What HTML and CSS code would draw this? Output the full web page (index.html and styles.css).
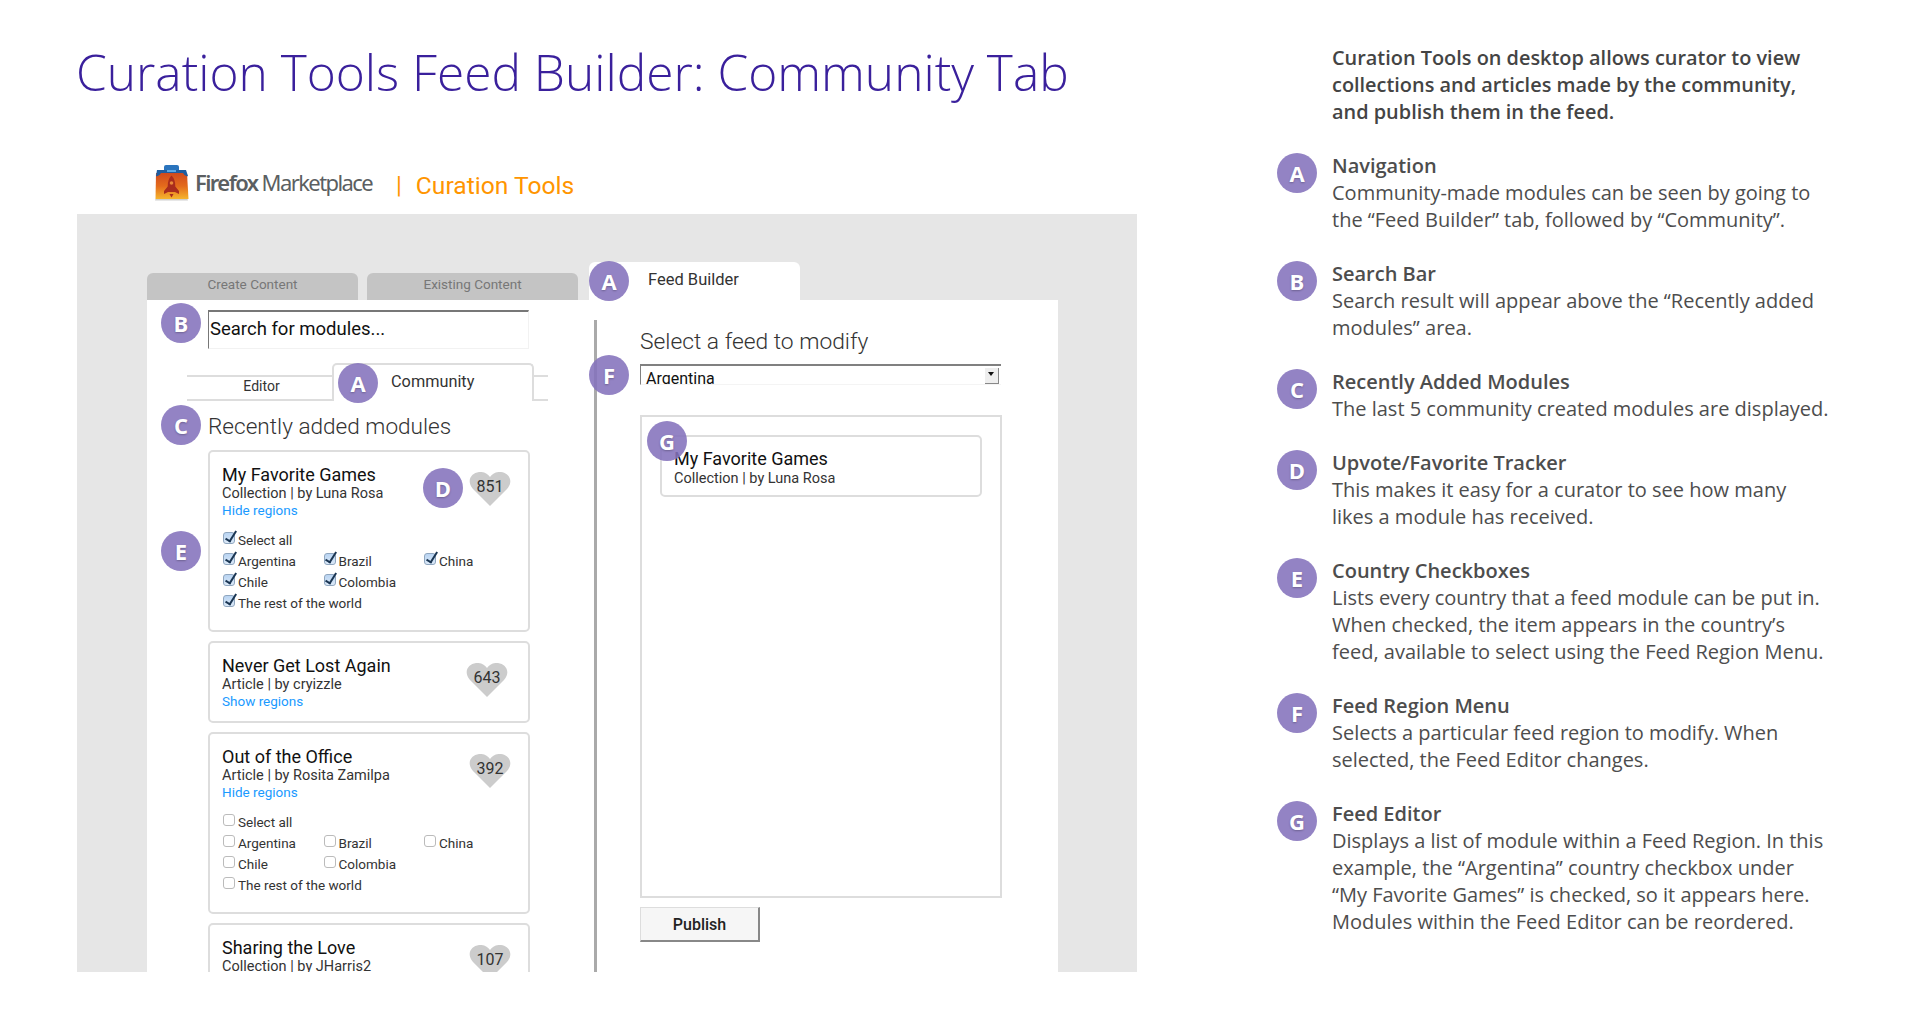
FILE: index.html
```html
<!DOCTYPE html>
<html lang="en">
<head>
<meta charset="UTF-8" />
<title>Curation Tools Feed Builder: Community Tab</title>
<link rel="stylesheet" href="styles.css">
</head>
<body>

<div class="page">
  <section class="mock">
    <h1>Curation Tools Feed Builder: Community Tab</h1>

    <div class="brand">
      <svg class="brand-logo" width="36" height="37" viewBox="0 0 36 37">
        <defs>
          <linearGradient id="bag" x1="0" y1="0" x2="0" y2="1">
            <stop offset="0" stop-color="#cf4a1e"/>
            <stop offset="0.5" stop-color="#e46a1c"/>
            <stop offset="1" stop-color="#f5b52e"/>
          </linearGradient>
        </defs>
        <path d="M2 9h31l1.500 26h-33z" fill="url(#bag)"/>
        <path d="M10 8V3q0-2 2-2h11q2 0 2 2v5h-4V6h-7v2z" fill="#2a74bd"/>
        <path d="M3 6h29l2 6q-3 1-5-3H7q-2 4-5 3z" fill="#1f5d9f"/>
        <rect x="13" y="6" width="9" height="2" fill="#5aa8e6"/>
        <path d="M17.500 11.500q4 4 3.800 11l3.700 4.500v3l-4-2h-7l-4 2v-3l3.700-4.500q-.2-7 3.800-11z" fill="#a92c1d"/>
        <circle cx="17.500" cy="19" r="1.800" fill="#e8883a"/>
        <path d="M15.500 30h4l-2 3.500z" fill="#a92c1d"/>
        <path d="M1.500 35h32l.5 1.500H1z" fill="#cfcfcf"/>
      </svg>
      <span class="brand-name"><b>Firefox</b> Marketplace</span>
      <span class="brand-sep">|</span>
      <span class="brand-tools">Curation Tools</span>
    </div>

    <div class="panel">
      <div class="main-tabs">
        <div class="main-tab">Create Content</div>
        <div class="main-tab">Existing Content</div>
        <div class="main-tab main-tab-active">
          <span class="badge badge-feed">A</span>
          Feed Builder
        </div>
      </div>

      <div class="sheet">
        <div class="modules">
          <div class="search">
            <span class="badge badge-search">B</span>
            <div class="search-box">Search for modules...</div>
          </div>

          <div class="sub-tabs">
            <div class="sub-tab">Editor</div>
            <div class="sub-tab sub-tab-active">
              <span class="badge badge-community">A</span>
              Community
            </div>
            <div class="sub-tab-end"></div>
          </div>

          <h2 class="recent">
            <span class="badge badge-recent">C</span>
            Recently added modules
          </h2>

          <div class="card">
            <span class="badge badge-heart">D</span>
            <span class="badge badge-regions">E</span>
            <div class="card-head">
              <div>
                <div class="card-title">My Favorite Games</div>
                <div class="card-meta">Collection | by Luna Rosa</div>
                <a class="card-link">Hide regions</a>
              </div>
              <div class="heart">
                <svg width="42" height="34" viewBox="0 0 42 34"><path d="M21 34L4 17C-3 9 2 1 10 0c5-.5 9 2 11 5 2-3 6-5.500 11-5 8 1 13 9 6 17z"/></svg>
                <span>851</span>
              </div>
            </div>
            <div class="regions">
              <label class="full"><input type="checkbox" checked>Select all</label>
              <label><input type="checkbox" checked>Argentina</label>
              <label><input type="checkbox" checked>Brazil</label>
              <label><input type="checkbox" checked>China</label>
              <label><input type="checkbox" checked>Chile</label>
              <label><input type="checkbox" checked>Colombia</label>
              <label class="full"><input type="checkbox" checked>The rest of the world</label>
            </div>
          </div>

          <div class="card">
            <div class="card-head">
              <div>
                <div class="card-title">Never Get Lost Again</div>
                <div class="card-meta">Article | by cryizzle</div>
                <a class="card-link">Show regions</a>
              </div>
              <div class="heart heart-in">
                <svg width="42" height="34" viewBox="0 0 42 34"><path d="M21 34L4 17C-3 9 2 1 10 0c5-.5 9 2 11 5 2-3 6-5.500 11-5 8 1 13 9 6 17z"/></svg>
                <span>643</span>
              </div>
            </div>
          </div>

          <div class="card">
            <div class="card-head">
              <div>
                <div class="card-title">Out of the Office</div>
                <div class="card-meta">Article | by Rosita Zamilpa</div>
                <a class="card-link">Hide regions</a>
              </div>
              <div class="heart">
                <svg width="42" height="34" viewBox="0 0 42 34"><path d="M21 34L4 17C-3 9 2 1 10 0c5-.5 9 2 11 5 2-3 6-5.500 11-5 8 1 13 9 6 17z"/></svg>
                <span>392</span>
              </div>
            </div>
            <div class="regions">
              <label class="full"><input type="checkbox">Select all</label>
              <label><input type="checkbox">Argentina</label>
              <label><input type="checkbox">Brazil</label>
              <label><input type="checkbox">China</label>
              <label><input type="checkbox">Chile</label>
              <label><input type="checkbox">Colombia</label>
              <label class="full"><input type="checkbox">The rest of the world</label>
            </div>
          </div>

          <div class="card">
            <div class="card-head">
              <div>
                <div class="card-title">Sharing the Love</div>
                <div class="card-meta">Collection | by JHarris2</div>
              </div>
              <div class="heart">
                <svg width="42" height="34" viewBox="0 0 42 34"><path d="M21 34L4 17C-3 9 2 1 10 0c5-.5 9 2 11 5 2-3 6-5.500 11-5 8 1 13 9 6 17z"/></svg>
                <span>107</span>
              </div>
            </div>
          </div>
        </div>

        <div class="feed">
          <h2 class="feed-label">Select a feed to modify</h2>
          <div class="feed-select">
            <span class="badge badge-select">F</span>
            <div class="select-box">
              <span>Argentina</span>
              <span class="select-arrow"></span>
            </div>
          </div>
          <div class="editor">
            <div class="editor-card">
              <span class="badge badge-editor">G</span>
              <div class="card-title">My Favorite Games</div>
              <div class="card-meta">Collection | by Luna Rosa</div>
            </div>
          </div>
          <button type="button" class="publish">Publish</button>
        </div>
      </div>
    </div>
  </section>

  <aside class="notes">
    <p class="intro">Curation Tools on desktop allows curator to view<br>collections and articles made by the community,<br>and publish them in the feed.</p>

    <div class="note">
      <span class="badge badge-note">A</span>
      <div>
        <h3>Navigation</h3>
        <p>Community-made modules can be seen by going to<br>the “Feed Builder” tab, followed by “Community”.</p>
      </div>
    </div>
    <div class="note">
      <span class="badge badge-note">B</span>
      <div>
        <h3>Search Bar</h3>
        <p>Search result will appear above the “Recently added<br>modules” area.</p>
      </div>
    </div>
    <div class="note">
      <span class="badge badge-note">C</span>
      <div>
        <h3>Recently Added Modules</h3>
        <p>The last 5 community created modules are displayed.</p>
      </div>
    </div>
    <div class="note">
      <span class="badge badge-note">D</span>
      <div>
        <h3>Upvote/Favorite Tracker</h3>
        <p>This makes it easy for a curator to see how many<br>likes a module has received.</p>
      </div>
    </div>
    <div class="note">
      <span class="badge badge-note">E</span>
      <div>
        <h3>Country Checkboxes</h3>
        <p>Lists every country that a feed module can be put in.<br>When checked, the item appears in the country’s<br>feed, available to select using the Feed Region Menu.</p>
      </div>
    </div>
    <div class="note">
      <span class="badge badge-note">F</span>
      <div>
        <h3>Feed Region Menu</h3>
        <p>Selects a particular feed region to modify. When<br>selected, the Feed Editor changes.</p>
      </div>
    </div>
    <div class="note">
      <span class="badge badge-note">G</span>
      <div>
        <h3>Feed Editor</h3>
        <p>Displays a list of module within a Feed Region. In this<br>example, the “Argentina” country checkbox under<br>“My Favorite Games” is checked, so it appears here.<br>Modules within the Feed Editor can be reordered.</p>
      </div>
    </div>
  </aside>
</div>

</body>
</html>
```

FILE: styles.css
```css
body {
  margin: 0;
  background: #fff;
  color: #333;
  font-family: "Open Sans", sans-serif;
}
.page {
  display: flex;
  height: 1018px;
  overflow: hidden;
}

/* left side: the mock */
.mock {
  width: 1060px;
  margin-left: 77px;
  flex: none;
}
h1 {
  margin: 0 0 0 -1px;
  padding-top: 36px;
  height: 72px;
  font-size: 49.6px;
  line-height: 72px;
  font-weight: 300;
  color: #3a209c;
  white-space: nowrap;
}
.brand {
  display: flex;
  align-items: center;
  height: 37px;
  margin-top: 56px;
  padding-left: 77px;
}
.brand-name {
  margin: -2px 0 0 5px;
  font-family: "Noto Sans", sans-serif;
  font-size: 22px;
  letter-spacing: -1.6px;
  color: #5b5f62;
}
.brand-name b {
  font-weight: 600;
}
.brand-sep {
  margin: 4px 0 0 24px;
  color: #ff9500;
  font-family: "Roboto", sans-serif;
  font-size: 24px;
}
.brand-tools {
  margin: 6px 0 0 14px;
  color: #ff9500;
  font-family: "Roboto", sans-serif;
  font-size: 24.6px;
}

.panel {
  height: 758px;
  margin-top: 13px;
  padding: 48px 79px 0 70px;
  box-sizing: border-box;
  background: #e6e6e6;
  overflow: hidden;
}
.main-tabs {
  display: flex;
  align-items: flex-end;
  gap: 9px;
  height: 38px;
}
.main-tab {
  width: 211px;
  height: 27px;
  background: #c4c4c4;
  border-radius: 6px 6px 0 0;
  color: #777;
  font-family: "Roboto", sans-serif;
  font-size: 13.5px;
  line-height: 23px;
  text-align: center;
}
.main-tab-active {
  position: relative;
  height: 38px;
  margin-left: 2px;
  padding-left: 59px;
  box-sizing: border-box;
  background: #fff;
  color: #333;
  font-size: 16.5px;
  line-height: 36px;
  text-align: left;
}
.sheet {
  display: flex;
  height: 672px;
  background: #fff;
}

/* badges */
.badge {
  width: 40px;
  height: 40px;
  border-radius: 50%;
  background: rgba(132, 114, 188, 0.88);
  color: #fff;
  font-family: "Open Sans", sans-serif;
  font-size: 22px;
  font-weight: 700;
  line-height: 40px;
  text-align: center;
  text-shadow: 0 1px 2px rgba(0,0,0,0.25);
  position: absolute;
  z-index: 2;
}
.badge-feed { left: 0; top: -1px; }
.badge-search { left: -47px; top: -7px; }
.badge-community { left: 4px; top: -2px; }
.badge-recent { left: -47px; top: -8px; }
.badge-heart { left: 213px; top: 16px; }
.badge-regions { left: -49px; top: 79px; }
.badge-select { left: -51px; top: -9px; }
.badge-editor { left: -15px; top: -16px; }
.badge-note {
  position: static;
  flex: none;
  margin-top: 1px;
}

/* modules column */
.modules {
  width: 386px;
  padding: 10px 0 0 61px;
  flex: none;
}
.search {
  position: relative;
}
.search-box {
  width: 321px;
  height: 39px;
  box-sizing: border-box;
  padding-left: 1px;
  border-top: 2px solid #777;
  border-left: 1px solid #777;
  border-right: 1px solid #f2f2f2;
  border-bottom: 1px solid #f2f2f2;
  color: #111;
  font-family: "Roboto", sans-serif;
  font-size: 18.5px;
  line-height: 35px;
}
.sub-tabs {
  display: flex;
  align-items: flex-end;
  width: 361px;
  height: 38px;
  margin: 14px 0 0 -21px;
  font-family: "Roboto", sans-serif;
}
.sub-tab {
  width: 145px;
  height: 26px;
  box-sizing: border-box;
  padding-left: 4px;
  border-top: 2px solid #ddd;
  border-bottom: 2px solid #ddd;
  font-size: 14px;
  line-height: 18px;
  text-align: center;
}
.sub-tab-active {
  position: relative;
  width: 202px;
  height: 38px;
  padding-left: 57px;
  border: 2px solid #ddd;
  border-bottom: 0;
  border-radius: 5px 5px 0 0;
  background: #fff;
  font-size: 16.3px;
  line-height: 33px;
  text-align: left;
}
.sub-tab-end {
  flex: 1;
  height: 26px;
  box-sizing: border-box;
  border-top: 2px solid #ddd;
  border-bottom: 2px solid #ddd;
}
.recent {
  position: relative;
  margin: 12px 0 9px;
  height: 28px;
  font-family: "Roboto", sans-serif;
  font-size: 22.6px;
  font-weight: 300;
  line-height: 28px;
  color: #333;
}

.card {
  position: relative;
  width: 322px;
  margin-bottom: 9px;
  padding: 12px 0 11px 12px;
  box-sizing: border-box;
  border: 2px solid #ddd;
  border-radius: 5px;
  font-family: "Roboto", sans-serif;
}
.card-head {
  display: flex;
  justify-content: space-between;
}
.card-title {
  font-size: 18px;
  line-height: 21px;
  color: #111;
}
.card-meta {
  font-size: 14.5px;
  line-height: 17px;
  color: #333;
}
.card-link {
  display: block;
  font-size: 13.5px;
  line-height: 17px;
  color: #1a9aff;
}
.heart {
  display: grid;
  width: 42px;
  height: 34px;
  margin: 8px 17px 0 0;
}
.heart-in {
  margin-right: 20px;
}
.heart svg {
  grid-area: 1 / 1;
  fill: #ccc;
}
.heart span {
  grid-area: 1 / 1;
  font-size: 16px;
  line-height: 29px;
  text-align: center;
  color: #333;
  z-index: 1;
}
.regions {
  display: grid;
  grid-template-columns: repeat(3, 100.500px);
  grid-auto-rows: 21px;
  margin: 10px 0 6px;
  padding-left: 1px;
  font-size: 13.5px;
  color: #333;
}
.regions label {
  display: flex;
  align-items: center;
  gap: 3px;
}
.regions .full {
  grid-column: 1 / -1;
}
.regions input {
  appearance: none;
  position: relative;
  width: 12px;
  height: 12px;
  margin: 0 0 3px;
  flex: none;
  background: #fff;
  border: 1px solid #bbb;
  border-radius: 3px;
}
.regions input:checked {
  background: linear-gradient(#b9d4f2, #dbe9f8);
  border-color: #8fa6bf;
}
.regions input:checked::after {
  content: "";
  position: absolute;
  left: 3.500px;
  top: -4px;
  width: 4px;
  height: 11px;
  border-right: 2.500px solid #1a3552;
  border-bottom: 2.500px solid #1a3552;
  transform: rotate(32deg);
}

/* feed column */
.feed {
  flex: 1;
  margin-top: 20px;
  padding-left: 43px;
  border-left: 3px solid #aaa;
  font-family: "Roboto", sans-serif;
}
.feed-label {
  margin: 8px 0 8px;
  font-size: 22.8px;
  font-weight: 300;
  line-height: 28px;
  color: #333;
}
.feed-select {
  position: relative;
}
.select-box {
  display: flex;
  justify-content: space-between;
  width: 361px;
  height: 21px;
  box-sizing: border-box;
  padding: 0 2px 0 5px;
  border-top: 2px solid #808080;
  border-left: 1px solid #808080;
  border-bottom: 1px solid #f4f4f4;
  color: #111;
  font-size: 16px;
  line-height: 26px;
  overflow: hidden;
}
.select-arrow {
  position: relative;
  width: 14px;
  height: 16px;
  margin-top: 2px;
  box-sizing: border-box;
  background: #eee;
  border-right: 1px solid #888;
  border-bottom: 1px solid #888;
}
.select-arrow::after {
  content: "";
  position: absolute;
  left: 3px;
  top: 4px;
  border-left: 3px solid transparent;
  border-right: 3px solid transparent;
  border-top: 4px solid #111;
}
.editor {
  width: 362px;
  height: 483px;
  margin-top: 30px;
  padding: 18px;
  box-sizing: border-box;
  border: 2px solid #ddd;
}
.editor-card {
  position: relative;
  width: 322px;
  height: 62px;
  padding: 11px 12px 0;
  box-sizing: border-box;
  border: 2px solid #ddd;
  border-radius: 5px;
}
.editor-card .card-meta {
  margin-top: 1px;
}
.publish {
  display: block;
  width: 120px;
  height: 35px;
  margin-top: 9px;
  padding: 0;
  background: #f6f6f6;
  border: 1px solid #ddd;
  border-right: 2px solid #888;
  border-bottom: 2px solid #888;
  color: #222;
  font-family: "Roboto", sans-serif;
  font-size: 16px;
  font-weight: 500;
}

/* right side: the notes */
.notes {
  width: 560px;
  margin-left: 140px;
  padding-top: 44px;
  flex: none;
  font-size: 20px;
  line-height: 27px;
  color: #4d4d4d;
}
.notes p {
  margin: 0;
}
.notes .intro {
  margin: 0 0 27px 55px;
  font-size: 19.9px;
  font-weight: 600;
  color: #444;
}
.note {
  display: flex;
  gap: 15px;
  margin-bottom: 27px;
}
.note h3 {
  margin: 0;
  font-size: 20px;
  font-weight: 600;
  color: #4d4d4d;
}
.note p {
  white-space: nowrap;
}
```
